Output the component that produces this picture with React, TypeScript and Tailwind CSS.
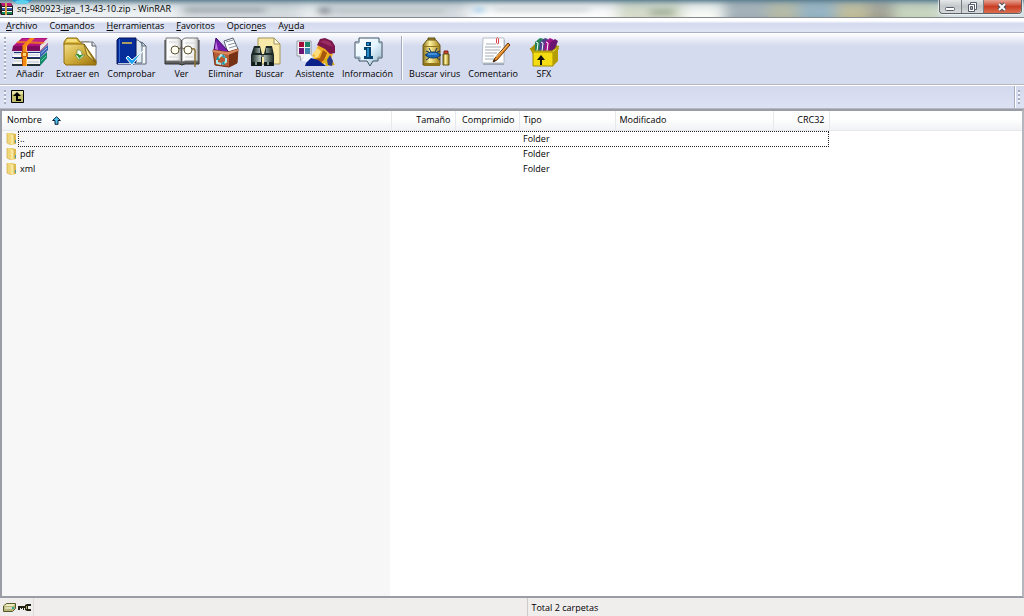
import { clsx } from "clsx";

const MENUS = [
  { before: "", key: "A", after: "rchivo" },
  { before: "Co", key: "m", after: "andos" },
  { before: "", key: "H", after: "erramientas" },
  { before: "", key: "F", after: "avoritos" },
  { before: "Opcio", key: "n", after: "es" },
  { before: "Ay", key: "u", after: "da" },
];

const COLUMNS = [
  { label: "Tamaño", right: true, width: "w-16" },
  { label: "Comprimido", right: true, width: "w-16" },
  { label: "Tipo", right: false, width: "w-24" },
  { label: "Modificado", right: false, width: "w-[158px]" },
  { label: "CRC32", right: true, width: "w-14" },
];

const ROWS = ["..", "pdf", "xml"];

function BooksIcon() {
  return (
    <>
      <path d="M1 10 10 2h26l-8 8z" fill="#b0117c" />
      <path d="M1 10h27v5H0z" fill="#7d0a5c" />
      <path d="m3 9 8-6h23l-3 3H10z" fill="#c02289" />
      <path d="m28 10 8-8v5l-8 8z" fill="#e9e3e6" />
      <path d="m28 15 8-8v1l-8 8z" fill="#7d0a5c" />
      <path d="M2 16h26v5H1z" fill="#fafafa" />
      <path d="M2 16h26v1H2zM0 21h28v1H0z" fill="#23307c" />
      <path d="m28 16 8-7v5l-8 8z" fill="#3760b1" />
      <path d="M29 17.500 35 12" stroke="#a6c1ef" />
      <path d="M2 23h26v5H1z" fill="#f5f5f5" />
      <path d="M2 22h26v1H2zM0 28h28v2H0z" fill="#26323a" />
      <path d="m28 22 7-6v6l-7 8z" fill="#168466" />
      <path d="m29 25 5-5" stroke="#56dbaa" />
      <path d="M2 18h9M2 25h9M16 19h11M16 26h11" stroke="#b9c3cf" />
      <path d="m10 10 8-8h5l-8 8v20h-5z" fill="#f58a15" />
      <path d="M10 10h1v20h-1z" fill="#ad4d09" />
      <path d="M14 10h1v20h-1z" fill="#ffc054" />
      <path d="M9 16h7v5H9z" fill="#ca640b" />
      <path d="M11 17h3v3h-3z" fill="#ffd76a" />
      <path d="m4 7 2-2 27 1-2 2z" fill="#f58a15" opacity=".75" />
    </>
  );
}

function ExtractIcon() {
  return (
    <>
      <path d="M4 6 7 2h10l3 4h9v3H4z" fill="#d8b53a" stroke="#8f6b0d" />
      <path d="M22 6h11l3 4v18H22z" fill="#fff" stroke="#747b83" />
      <path d="M32 6v4h4" fill="#dde4e9" stroke="#505860" />
      <path d="M4 8h20l12 17v4H6l-2-2z" fill="url(#gold)" stroke="#8f6b0d" />
      <path d="m24 8 3 11 8 7z" fill="#f7e17d" stroke="#604b0e" strokeWidth=".7" />
      <path d="M7 3h9l2 3H6z" fill="#f4df7b" />
      <path d="M17 14q5-1 5 5h3l-6 5-4-5h2z" fill="#f7fff1" stroke="#5c8243" strokeWidth=".7" />
      <path d="m19 23 4-4h-5zM16 18l3 4v-4z" fill="#31922a" />
    </>
  );
}

function TestIcon() {
  return (
    <>
      <path d="M22 6h6l5 4v18H20z" fill="#f8fbfd" stroke="#596776" />
      <path d="M18 4h7l4 4v19H16z" fill="#e4ecf3" stroke="#5f6f7f" />
      <path d="m29 6 4 4h-4z" fill="#cbd6df" stroke="#5f6f7f" />
      <path d="M4 4 6 2h17v24l-2 2H4z" fill="#062e9b" stroke="#071552" />
      <path d="M6 3h1v23H6z" fill="#3267d0" />
      <path d="M9 7h10" stroke="#e0c54b" strokeWidth="1.500" />
      <path d="M5 27h17v1H5z" fill="#b9c9db" />
      <path d="m13 22 6 7L30 15 19 24l-4-4z" fill="#16a0ef" stroke="#fff" />
    </>
  );
}

function ViewIcon() {
  return (
    <>
      <path d="M2 4v24h14l3 1 3-1h14V4" fill="#5d5d5d" stroke="#303030" />
      <path d="M3 2h13l2 2v22l-2-1H3z" fill="url(#page)" stroke="#777" />
      <path d="M35 2H22l-3 2v22l3-1h13z" fill="url(#page)" stroke="#777" />
      <path d="M18.500 4v22" stroke="#555" />
      <path d="M6 6h8M6 21h8M22 7h9M22 21h8" stroke="#d5d5d5" />
      <g fill="#fffef0" stroke="#5d5539">
        <circle cx="12" cy="14" r="4" />
        <circle cx="25" cy="14" r="4" />
        <path d="M16 13q2-3 5 0" fill="none" />
      </g>
      <path d="M29 13q4-1 3 5v13" fill="none" stroke="#8d7434" strokeWidth="1.500" />
    </>
  );
}

function DeleteIcon() {
  return (
    <>
      <path d="m17 5 9-3 5 11-10 4z" fill="#fff" stroke="#596271" />
      <path d="m19 6 7-2M21 9l7-2M22 12l7-2" stroke="#8391a6" />
      <path d="m7 14 2-12 13 14H10z" fill="#751aaa" stroke="#3e086b" />
      <path d="m9 5-1 8 3 1z" fill="#c77ce4" />
      <path d="m6 14 15 2 10-3-1 14-8 4-14-2z" fill="#b75b34" stroke="#793017" />
      <path d="m22 17 9-4-1 14-8 4z" fill="#763117" />
      <path d="m6 14 15 2 10-3v2l-10 4-15-3z" fill="#d9885c" />
      <path
        d="m11 23 3-4 4 2m1 1 0 4-4 2m-1 0-4-1v-3"
        fill="none"
        stroke="#a9efef"
        strokeWidth="2"
      />
      <path d="m16 18 3 4-4-1zM17 25l-3 3 4 1zM9 24l2-4 2 4z" fill="#199bac" />
    </>
  );
}

function FindIcon() {
  return (
    <>
      <path d="M7 2h16l6 6v20H7z" fill="#f8e9a9" stroke="#a39559" />
      <path d="M23 2v6h6z" fill="#fffbe3" stroke="#a39559" />
      <path d="M3 10h6l2 8h2l2-8h6l2 9v11H13v-9h-2v9H0V19z" fill="#1c2826" />
      <path d="M3 12h6v5H3zM15 12h6v5h-6z" fill="url(#metal)" />
      <path d="M1 19h9v7H1zM13 19h9v7h-9z" fill="url(#metal)" />
      <path d="M1 26h9v4H1zM13 26h9v4h-9z" fill="#111b1a" />
      <path d="M4 26h2v3H4zM16 26h2v3h-2z" fill="#7c938d" />
      <path d="M10 20h3" stroke="#c8d7c8" />
    </>
  );
}

function WizardIcon() {
  return (
    <>
      <path d="M0 5h14v15H8l-4 5-1-5H0z" fill="#f1f1f1" stroke="#727c89" strokeWidth=".7" />
      <path d="M2 6h5v5H2z" fill="#a60938" />
      <path d="M8 6h5v5H8z" fill="#198267" />
      <path d="M2 12h5v6H2z" fill="#6c1575" />
      <path d="M8 12h5v6H8z" fill="#3f86b2" />
      <path d="m4 25 4-6h6l3 7z" fill="#f0f7ff" />
      <path d="m21 9 8 3 7 6-3 7-12 5-5-6 1-3-2-1 4-5z" fill="#f1ad22" />
      <path d="m20 12 4 3-3 6-4 1 1-3-3-1 4-4z" fill="#ffdc77" />
      <path d="m26 14 4 3-3 7-5 4-4-5 5-1z" fill="#a7570d" />
      <path d="m9 27 5-5 7 2 8 6H8z" fill="#0b218a" />
      <path d="m27 24 5-5 6 10-9 1z" fill="#d9b21b" />
      <path d="m30 24 3-5 3 6-1 5-4-1z" fill="#303b88" />
      <path d="m20 9 3-6 5-1 7 3 3 5v7l-5 1-5-5z" fill="#7b174c" />
      <path d="m23 6 4-2 6 2 3 5-5-2z" fill="#9c2d63" />
    </>
  );
}

function InfoIcon() {
  return (
    <>
      <path
        d="M9 2h20v4h3v16h-4v3h-5l-3 5-3-5H9v-3H5V6h4z"
        fill="url(#bubble)"
        stroke="#415565"
      />
      <path d="M9 3v4H6m23-4v4h3M6 21h4v3m18 0v-3h4" fill="none" stroke="#879dac" />
      <path d="M16 6h5v4h-5zM14 11h7v9h2v3h-9v-3h2v-6h-2z" fill="#06436f" />
      <path d="M17 7h2v2h-2zM17 12h2v9h-2z" fill="#2389c7" />
    </>
  );
}

function VirusIcon() {
  return (
    <>
      <path d="M11 2h7v3h-7z" fill="#ab8e23" stroke="#574a16" />
      <path d="m6 9 4-5h9l4 5v20H6z" fill="url(#can)" stroke="#65571c" />
      <path d="M7 27h16v3H7zM6 10h17v1H6z" fill="#92761c" />
      <path d="M27 15h4v3h-4z" fill="#d7422a" stroke="#7a251b" />
      <path d="M26 18h6v11h-6z" fill="url(#can)" stroke="#65571c" />
      <path
        d="M9 15l3 1m11-1-3 1M8 19h16M9 24l3-2m11 2-3-2M12 12l2 4m6-4-2 4"
        fill="none"
        stroke="#12345e"
      />
      <ellipse cx="16" cy="19" rx="7" ry="3" fill="#1768bd" stroke="#123568" />
      <path d="M11 18h9" stroke="#6bb8f0" />
    </>
  );
}

function CommentIcon() {
  return (
    <>
      <path d="M10 4h20l-1 25H8z" fill="#9caab7" />
      <path d="M8 2h21v25H7z" fill="#fff" stroke="#b6bec8" />
      <path d="M11 8h10M10 11h16M10 14h15M10 17h12M10 20h9M10 23h13" stroke="#a3adb8" />
      <path d="M21.500 7V2.500q1-2 2 0v5q-1 1-2-.5" fill="none" stroke="#e04749" />
      <path d="m33 7 2 2-13 15-4 2 2-4z" fill="#e58a24" stroke="#6f3b12" />
      <path d="m21 21 12-12" stroke="#ffd47c" strokeWidth=".7" />
      <path d="m18 26 1-3 2 2z" fill="#30261f" />
    </>
  );
}

function SfxIcon() {
  return (
    <>
      <path d="m4 13 5-5 22 1 2 4-6 5H7z" fill="#a68c00" />
      <path d="m9 6 5-4 4 1-5 12H9z" fill="#25835a" />
      <path d="m14 6 5-4 3 1-4 12h-5z" fill="#4c418a" />
      <path d="m19 6 5-4 4 2-5 12h-5z" fill="#9e1487" />
      <path d="m24 7 5-4 3 2-4 10h-5z" fill="#691370" />
      <path d="m10 6 2 1-1 8m4-9 2 1-1 8m4-9 2 1-1 8" fill="none" stroke="#fff" />
      <path d="m4 12 4 3h18l7-5-5 7H8z" fill="#ece13e" stroke="#aa9800" />
      <path d="M7 16h20v14H7z" fill="#f3dd12" stroke="#a28c00" />
      <path d="m27 16 5-4v13l-5 5z" fill="#b49d00" />
      <path d="m15 19 4 5h-3v5h-2v-5h-3z" fill="#111" />
    </>
  );
}

const TOOLS = [
  { label: "Añadir", icon: BooksIcon },
  { label: "Extraer en", icon: ExtractIcon },
  { label: "Comprobar", icon: TestIcon },
  { label: "Ver", icon: ViewIcon },
  { label: "Eliminar", icon: DeleteIcon },
  { label: "Buscar", icon: FindIcon },
  { label: "Asistente", icon: WizardIcon },
  { label: "Información", icon: InfoIcon },
];

const EXTRA_TOOLS = [
  { label: "Buscar virus", icon: VirusIcon },
  { label: "Comentario", icon: CommentIcon },
  { label: "SFX", icon: SfxIcon },
];

// Gradients shared by the toolbar icons
function IconDefs() {
  return (
    <svg className="absolute h-0 w-0" aria-hidden="true">
      <defs>
        <linearGradient id="gold" x2="1" y2="1">
          <stop stopColor="#f3df88" />
          <stop offset=".5" stopColor="#cfac3a" />
          <stop offset="1" stopColor="#9b700c" />
        </linearGradient>
        <linearGradient id="page">
          <stop stopColor="#fff" />
          <stop offset=".7" stopColor="#f1f1f1" />
          <stop offset="1" stopColor="#bdbdbd" />
        </linearGradient>
        <linearGradient id="metal">
          <stop stopColor="#25332f" />
          <stop offset=".45" stopColor="#c9d8d1" />
          <stop offset="1" stopColor="#293632" />
        </linearGradient>
        <linearGradient id="bubble" x2="1" y2="1">
          <stop stopColor="#fff" />
          <stop offset=".5" stopColor="#e4f5ff" />
          <stop offset="1" stopColor="#91b2c6" />
        </linearGradient>
        <linearGradient id="can">
          <stop stopColor="#856d10" />
          <stop offset=".4" stopColor="#fff4a0" />
          <stop offset="1" stopColor="#a48117" />
        </linearGradient>
      </defs>
    </svg>
  );
}

function ToolButton({ label, icon: Icon }: { label: string; icon: () => React.ReactNode }) {
  return (
    <button className="flex min-w-11 flex-col items-center px-1">
      <svg className="h-8 w-9" viewBox="0 0 36 32" overflow="visible" aria-hidden="true">
        <Icon />
      </svg>
      <span className="leading-3 whitespace-nowrap">{label}</span>
    </button>
  );
}

function Grip() {
  return (
    <span className="my-1 w-[2px] shrink-0 bg-[repeating-linear-gradient(to_bottom,#a5adc4_0_2px,#f4f6fc_2px_4px)]" />
  );
}

function FolderIcon() {
  return (
    <svg className="h-[13px] w-[11px] shrink-0" viewBox="0 0 11 13" aria-hidden="true">
      <path d="m5 1 5 1v10l-5 1z" fill="#e0bd50" />
      <path d="M1 1h4l1 2v10l-5-2z" fill="#f2d778" />
      <path d="m5 2 3 1v10l-3-1z" fill="#f9e9a0" />
      <path d="M1 1v10l4 2M8 3v9" fill="none" stroke="#c9a33d" strokeWidth=".6" />
      <path d="M9 8h1v3H9z" fill="#4b9ba8" />
    </svg>
  );
}

// Blurred windows seen through the glass of the title bar
function GlassBackdrop() {
  return (
    <svg
      className="absolute inset-0 h-full w-full"
      viewBox="0 0 1024 17"
      preserveAspectRatio="none"
      aria-hidden="true"
    >
      <defs>
        <filter id="haze" x="-20%" y="-50%" width="140%" height="200%">
          <feGaussianBlur stdDeviation="7 1" />
        </filter>
        <filter id="hazeSmall" x="-20%" y="-50%" width="140%" height="200%">
          <feGaussianBlur stdDeviation="4 2" />
        </filter>
        <linearGradient id="glassTop" x2="0" y2="1">
          <stop stopColor="#54788a" stopOpacity=".9" />
          <stop offset=".35" stopColor="#9bafb9" stopOpacity=".3" />
          <stop offset="1" stopColor="#fff" stopOpacity="0" />
        </linearGradient>
      </defs>
      <rect width="1024" height="17" fill="#d2d8dc" />
      <g filter="url(#haze)">
        <rect x="-10" y="3" width="190" height="20" fill="#edf1f3" />
        <rect x="300" y="0" width="20" height="20" fill="#e9edef" />
        <rect x="467" y="0" width="150" height="20" fill="#fbfbfb" />
        <rect x="617" y="0" width="66" height="20" fill="#d3dac6" />
        <rect x="683" y="0" width="39" height="20" fill="#f7faf6" />
        <rect x="724" y="0" width="44" height="20" fill="#9dabb2" />
        <rect x="768" y="0" width="30" height="20" fill="#b0b69e" />
        <rect x="798" y="0" width="38" height="20" fill="#8daebf" />
        <rect x="836" y="0" width="32" height="20" fill="#bbb893" />
        <rect x="868" y="0" width="26" height="20" fill="#9c9b8c" />
        <rect x="894" y="0" width="46" height="20" fill="#c5d3ba" />
        <rect x="940" y="0" width="90" height="20" fill="#d5e1e4" />
      </g>
      <g filter="url(#hazeSmall)">
        <rect x="185" y="7" width="80" height="6" fill="#a5abb0" />
        <rect x="320" y="7" width="9" height="7" fill="#777d82" />
        <rect x="335" y="9" width="110" height="4" fill="#bac0c4" />
        <rect x="475" y="7" width="8" height="6" fill="#95c9ec" />
        <rect x="494" y="8" width="95" height="4" fill="#d9dcde" />
        <rect x="650" y="8" width="24" height="8" fill="#a9b49b" />
      </g>
      <rect width="1024" height="17" fill="url(#glassTop)" />
    </svg>
  );
}

function TitleBar() {
  return (
    <header className="relative flex h-[18px] shrink-0 justify-between overflow-hidden border-b border-[#858a8e]">
      <GlassBackdrop />
      <div className="relative flex items-center">
        <svg className="absolute -top-3 left-2 h-4 w-7" viewBox="0 0 28 16" aria-hidden="true">
          <ellipse cx="14" cy="6" rx="13" ry="10" fill="#2699d4" />
          <ellipse cx="14" cy="14" rx="7" ry="2" fill="#5bd1ed" />
        </svg>
        <svg className="relative mr-1 h-[14px] w-[13px]" viewBox="0 0 13 14" aria-hidden="true">
          <path d="M0 1h11l2 3v9H1L0 11z" fill="#202025" />
          <path d="M1 1h10l1 3H2z" fill="#bd1a78" />
          <path d="M2 5h10v1H2zM2 9h10v1H2z" fill="#fff" />
          <path d="M2 6h10v2H2z" fill="#3557ad" />
          <path d="M2 10h10v2H2z" fill="#158753" />
          <path d="M5 1h2v12H5z" fill="#d3a242" />
        </svg>
        <h1 className="relative text-black">sq-980923-jga_13-43-10.zip - WinRAR</h1>
      </div>
      <div className="relative mr-[2px] flex h-[14px] rounded-b border border-t-0 border-[#5c6267] shadow-[0_0_1px_1px_rgba(255,255,255,0.6)]">
        <button
          aria-label="Minimizar"
          className="flex w-[22px] items-center justify-center rounded-bl border-r border-[#777c80] bg-linear-to-b from-[#e5e8e9] via-[#c4c8ca] to-[#d6dadb]"
        >
          <svg className="h-3 w-[11px]" viewBox="0 0 11 12" aria-hidden="true">
            <rect x=".5" y="6.500" width="9" height="3" rx="1" fill="#fff" stroke="#555c6a" />
          </svg>
        </button>
        <button
          aria-label="Restaurar"
          className="flex w-[22px] items-center justify-center border-r border-[#777c80] bg-linear-to-b from-[#e5e8e9] via-[#bfc3c5] to-[#d6dadb]"
        >
          <svg className="h-3 w-[11px]" viewBox="0 0 11 12" aria-hidden="true">
            <path d="M3.500 1.500h6v7h-6z" fill="#fff" stroke="#555c6a" />
            <path d="M1.500 3.500h6v7h-6z" fill="#fff" stroke="#555c6a" />
            <path d="M3.500 5.500h2v3h-2z" fill="#aaa" stroke="#555c6a" />
          </svg>
        </button>
        <button
          aria-label="Cerrar"
          className="flex w-[37px] items-center justify-center rounded-br bg-linear-to-b from-[#e5a294] via-[#c83d23] to-[#dc6e50]"
        >
          <svg className="h-3 w-[11px]" viewBox="0 0 11 12" aria-hidden="true">
            <path d="m2 3 6 6m0-6-6 6" stroke="#4f5262" strokeWidth="4" />
            <path d="m2 3 6 6m0-6-6 6" stroke="#fff" strokeWidth="2" />
          </svg>
        </button>
      </div>
    </header>
  );
}

function FileList() {
  return (
    <main className="min-h-0 flex-1 overflow-hidden border-2 border-[#9a9da5] border-r-[#b4b7be] bg-[linear-gradient(to_right,#f7f7f7_388px,#ffffff_388px)]">
      <table className="w-full table-fixed border-collapse">
        <thead>
          <tr className="h-[19px] bg-linear-to-b from-white from-40% to-[#f1f2f4] text-left">
            <th className="w-[389px] border-r border-b border-[#e6e8eb] p-0 pl-[5px] font-normal">
              <button className="flex items-center gap-[10px]">
                Nombre
                <svg className="h-[9px] w-[9px]" viewBox="0 0 9 9" aria-label="Ascendente">
                  <path d="M4.500.7 8.400 4.500H6v3.800H3V4.500H.6z" fill="#52c5f2" stroke="#071e38" />
                </svg>
              </button>
            </th>
            {COLUMNS.map((col) => (
              <th
                key={col.label}
                className={clsx(
                  "border-r border-b border-[#e6e8eb] px-1 py-0 font-normal",
                  col.width,
                  col.right && "text-right",
                )}
              >
                {col.label}
              </th>
            ))}
            <th className="border-b border-[#e6e8eb]" />
          </tr>
        </thead>
        <tbody>
          {ROWS.map((name, i) => (
            <tr key={name} className="h-[15px]">
              <td className="relative p-0 pl-1">
                <span className="flex items-center gap-[3px] leading-[15px]">
                  <FolderIcon />
                  {name}
                </span>
                {/* focus rectangle spans every column */}
                {i === 0 && (
                  <span className="absolute top-0 left-4 h-4 w-[811px] border border-dotted border-[#222]" />
                )}
              </td>
              <td />
              <td />
              <td className="p-0 pl-1 leading-[15px]">Folder</td>
              <td />
              <td />
              <td />
            </tr>
          ))}
        </tbody>
      </table>
    </main>
  );
}

export default function App() {
  return (
    <div className="flex h-screen flex-col overflow-hidden bg-[#d5dbef] font-['Open_Sans',sans-serif] text-[9px] leading-3 text-black">
      <IconDefs />
      <TitleBar />

      <nav className="flex h-[15px] shrink-0 items-center gap-3 border-b border-[#a9b0c8] bg-linear-to-b from-white from-20% via-[#d5dbef] via-40% to-[#dfe4f4] px-[6px] pt-[2px]">
        {MENUS.map((m) => (
          <button key={m.key}>
            {m.before}
            <u>{m.key}</u>
            {m.after}
          </button>
        ))}
      </nav>

      {/* Toolbar */}
      <div className="flex h-[52px] shrink-0 border-b border-[#b7b8c0] bg-linear-to-b from-white via-[#d5dbef] via-25% to-[#d5dbef] pl-1">
        <Grip />
        <div className="flex items-start pt-[3px] pl-[2px]">
          {TOOLS.map((tool) => (
            <ToolButton key={tool.label} {...tool} />
          ))}
          <span className="mr-[2px] ml-1 h-11 w-[2px] border-r border-white bg-[#a5acbf]" />
          {EXTRA_TOOLS.map((tool) => (
            <ToolButton key={tool.label} {...tool} />
          ))}
        </div>
      </div>

      {/* Address bar */}
      <div className="flex h-6 shrink-0 border-t border-b border-t-white border-b-[#b4b8c6] bg-linear-to-b from-[#d3d9ee] to-[#dde2f3] pl-1">
        <Grip />
        <button aria-label="Subir un nivel" className="ml-[5px] self-start pt-1">
          <svg className="h-[13px] w-[13px]" viewBox="0 0 13 13" aria-hidden="true">
            <path d="M.5.5h12v12H.5z" fill="#c2bd6b" stroke="#000" />
            <path d="M1 1h11v3H1z" fill="#e6e2a3" />
            <path d="m6 2 4 4H7v3h3v2H5V6H2z" fill="#000" />
          </svg>
        </button>
        <span className="mr-[2px] ml-auto w-[2px] border-r border-white bg-[#a5acbf]" />
        <Grip />
        <span className="w-1" />
      </div>

      <FileList />

      <footer className="flex h-[18px] shrink-0 items-center bg-[#f0eded]">
        <div className="flex h-full w-[34px] items-center gap-[2px] border-r border-[#dedada] pl-[3px]">
          <svg className="h-[9px] w-[13px]" viewBox="0 0 13 9" aria-label="Unidad">
            <path d="m.5 3 3-2.500h9v5l-3 3h-9z" fill="#b8b777" stroke="#56592b" />
            <path d="M1 3h9l2-2H4z" fill="#eeedc4" />
            <path d="M2 5h7" stroke="#fff" />
            <path d="M9 5h2" stroke="#27a69b" strokeWidth="2" />
          </svg>
          <svg className="h-[7px] w-[13px]" viewBox="0 0 13 7" aria-label="Contraseña">
            <path d="M0 2h7V1l2-1h4v2h-3v3h3v2H9L7 6V4H6v2H5V4H4v1H3V4H2v2H0z" fill="#222015" />
            <path d="M8 2h1v3H8z" fill="#b7a957" />
          </svg>
        </div>
        <div className="h-full flex-[495]" />
        <div className="flex h-full flex-[495] items-center border-l border-[#cfcbcb] pt-[2px] pl-1">
          Total 2 carpetas
        </div>
      </footer>
    </div>
  );
}
